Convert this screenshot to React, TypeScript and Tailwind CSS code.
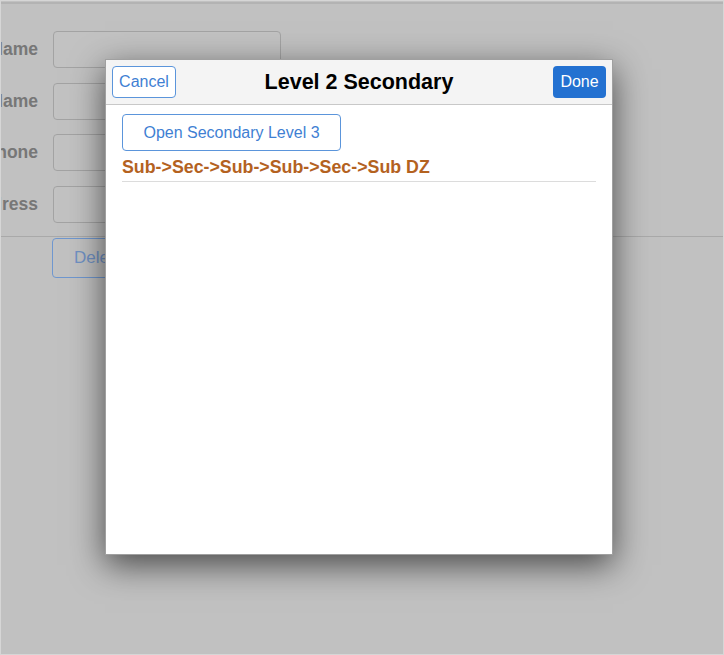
import React from "react";

const font = { fontFamily: '"Liberation Sans", Arial, sans-serif' };

function Row({ label }: { label: string }) {
  return (
    <div className="flex items-center h-[37px]">
      <div className="w-[37px] flex justify-end whitespace-nowrap text-[17.5px] font-bold text-[#777777]">
        {label}
      </div>
      <div className="ml-[15px] w-[228px] h-[37px] rounded-[4px] border border-[#a3a3a3] bg-[#c2c2c2]" />
    </div>
  );
}

export default function App() {
  return (
    <div
      className="relative w-[724px] h-[655px] overflow-hidden bg-[#c1c1c1] border border-[#d6d6d6]"
      style={font}
    >
      <div className="mt-[1px] border-t-2 border-[#b3b3b3]" />
      <div className="flex flex-col gap-[14.5px] pt-[27px]">
        <Row label="First Name" />
        <Row label="Last Name" />
        <Row label="Phone" />
        <Row label="Address" />
      </div>
      <div className="mt-[13px] border-t border-[#a9a9a9]" />
      <div className="pl-[51px] pt-[1px]">
        <div className="w-[110px] h-[40px] rounded-[4px] border border-[#6f97cf] flex items-center pl-[21px] text-[17px] text-[#7091c4]">
          Delete
        </div>
      </div>

      <div className="absolute left-[104px] top-[58px] w-[508px] h-[496px] bg-white border border-[#a0a0a0] shadow-[0_10px_32px_rgba(0,0,0,0.62)] flex flex-col">
        <div className="h-[45px] bg-[#f4f4f4] border-b border-[#c8c8c8] grid grid-cols-[1fr_auto_1fr] items-center px-[6px]">
          <div className="flex justify-start">
            <button className="w-[64px] h-[32px] rounded-[4px] border border-[#5b95db] bg-white text-[16px] text-[#3f7fd3]">
              Cancel
            </button>
          </div>
          <div className="text-[21.5px] font-bold text-black">Level 2 Secondary</div>
          <div className="flex justify-end">
            <button className="w-[53px] h-[32px] rounded-[4px] bg-[#2371d1] text-[16px] text-white">
              Done
            </button>
          </div>
        </div>
        <div className="px-[16px] pt-[9px]">
          <button className="w-[219px] h-[37px] rounded-[4px] border border-[#5b95db] bg-white text-[16px] text-[#3f7fd3]">
            Open Secondary Level 3
          </button>
          <div className="mt-[6px] pb-[4px] border-b border-[#dcdcdc] text-[17.8px] font-bold text-[#b4621f] leading-[20px]">
            Sub-&gt;Sec-&gt;Sub-&gt;Sub-&gt;Sec-&gt;Sub DZ
          </div>
        </div>
      </div>
    </div>
  );
}
